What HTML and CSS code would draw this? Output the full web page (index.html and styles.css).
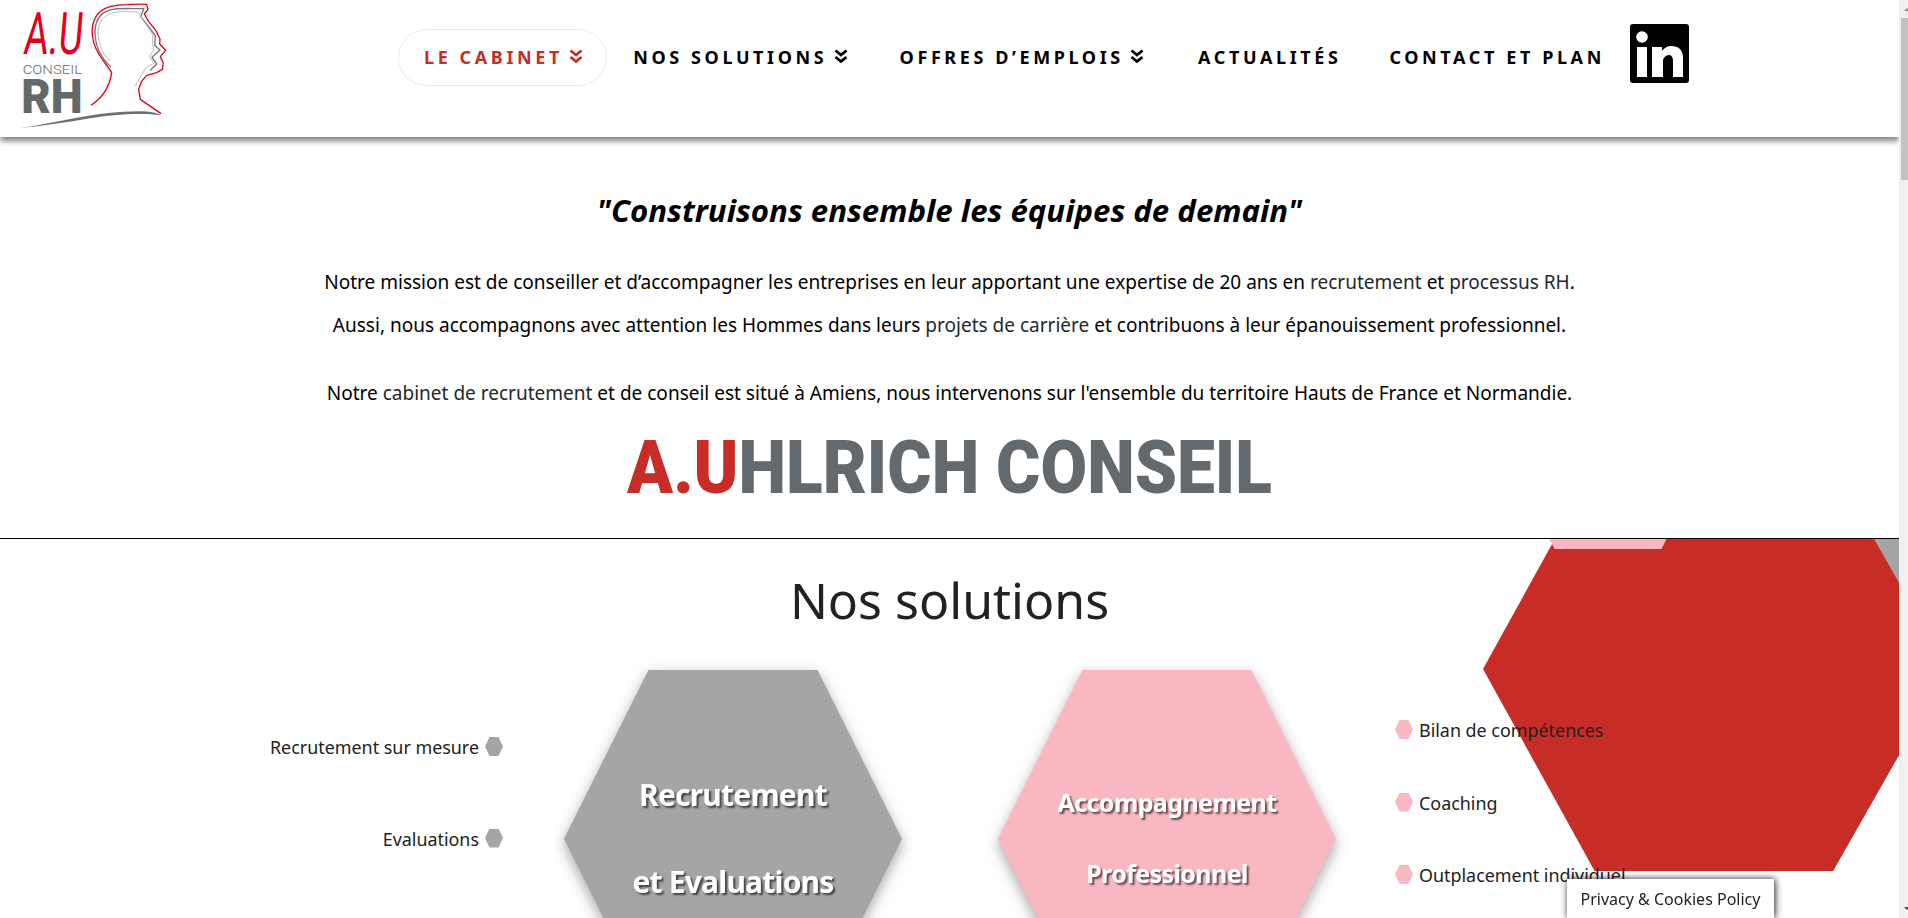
FILE: index.html
```html
<!DOCTYPE html>
<html lang="fr">
<head>
<meta charset="utf-8">
<title>A.U Conseil RH</title>
<link rel="stylesheet" href="styles.css">
</head>
<body>
<div class="page">
  <header class="site-header">
    <a class="logo" href="#">
      <svg viewBox="0 0 510 411" width="170" height="137">
        <text class="logo-au" x="74" y="163" textLength="176" lengthAdjust="spacingAndGlyphs">A.U</text>
        <text class="logo-conseil" x="68" y="222" textLength="178" lengthAdjust="spacingAndGlyphs">CONSEIL</text>
        <text class="logo-rh" x="64" y="340" textLength="184" lengthAdjust="spacingAndGlyphs">RH</text>
        <path class="head-red" d="M274 315C305 295 328 265 335 218C318 190 292 165 282 130C270 90 278 55 300 35C320 18 345 14 380 14C400 13 425 12 440 13L444 28L433 42L446 65L468 92L480 118L479 132L497 151L481 170L490 190L487 208L470 218L440 226L424 245L416 268L421 298L482 340"/>
        <path class="head-dark" d="M332 200C300 170 285 135 285 95C286 55 305 32 345 27C375 24 405 27 432 25L422 50L448 82L466 108L464 136L480 150L456 172L470 192L452 210"/>
        <path class="head-mid" d="M330 182C305 160 295 130 294 98C294 65 312 42 350 36C375 33 395 36 415 36L430 62L458 104L458 134L462 150L448 170L462 190L440 200L405 258"/>
        <path class="swoosh" d="M60 384C170 368 270 340 370 335C420 332 465 332 483 346C430 338 340 342 270 355C200 367 130 378 60 384Z"/>
      </svg>
    </a>
    <nav class="main-nav">
      <a class="nav-item active" href="#">LE CABINET <svg class="chev" viewBox="0 0 14 15"><path d="M1.5 1.5l5.5 4.5 5.5-4.5M1.5 8l5.5 4.5 5.5-4.5"/></svg></a>
      <a class="nav-item" href="#">NOS SOLUTIONS <svg class="chev" viewBox="0 0 14 15"><path d="M1.5 1.5l5.5 4.5 5.5-4.5M1.5 8l5.5 4.5 5.5-4.5"/></svg></a>
      <a class="nav-item wide" href="#">OFFRES D’EMPLOIS <svg class="chev" viewBox="0 0 14 15"><path d="M1.5 1.5l5.5 4.5 5.5-4.5M1.5 8l5.5 4.5 5.5-4.5"/></svg></a>
      <a class="nav-item plain" href="#">ACTUALITÉS</a>
      <a class="nav-item plain" href="#">CONTACT ET PLAN</a>
      <a class="linkedin" href="#" aria-label="LinkedIn">
        <svg viewBox="0 0 59 59" width="59" height="59">
          <rect width="59" height="59" rx="3"/>
          <circle cx="12" cy="13" r="5.8" fill="#fff"/>
          <rect x="7" y="23" width="10" height="30" fill="#fff"/>
          <path fill="#fff" d="M22 23h10v4c2-3 5-5 9-5 8 0 12 4 12 12v19H43V37c0-3-1-6-4-6s-6 3-6 6v16H22z"/>
        </svg>
      </a>
    </nav>
  </header>

  <section class="intro">
    <h2 class="slogan">"Construisons ensemble les équipes de demain"</h2>
    <p>Notre mission est de conseiller et d’accompagner les entreprises en leur apportant une expertise de 20 ans en <a href="#">recrutement</a> et <a href="#">processus RH</a>.</p>
    <p>Aussi, nous accompagnons avec attention les Hommes dans leurs <a href="#">projets de carrière</a> et contribuons à leur épanouissement professionnel.</p>
    <p class="gap-top">Notre <a href="#">cabinet de recrutement</a> et de conseil est situé à Amiens, nous intervenons sur l'ensemble du territoire Hauts de France et Normandie.</p>
    <h1 class="brand"><span class="brand-red">A.U</span>HLRICH CONSEIL</h1>
  </section>

  <section class="solutions">
    <div class="deco deco-gray"></div>
    <div class="deco deco-pink"></div>
    <div class="deco-red"></div>
    <h2 class="solutions-title">Nos solutions</h2>
    <div class="solutions-row">
      <ul class="side-list left">
        <li>Recrutement sur mesure<span class="bullet gray"></span></li>
        <li>Evaluations<span class="bullet gray"></span></li>
      </ul>
      <div class="hex-wrap">
        <div class="hex hex-gray"><p>Recrutement</p><p>et Evaluations</p></div>
      </div>
      <div class="hex-wrap second">
        <div class="hex hex-pink"><p>Accompagnement</p><p>Professionnel</p></div>
      </div>
      <ul class="side-list right">
        <li><span class="bullet pink"></span>Bilan de compétences</li>
        <li><span class="bullet pink"></span>Coaching</li>
        <li><span class="bullet pink"></span>Outplacement individuel</li>
      </ul>
    </div>
  </section>
</div>
<div class="privacy">Privacy &amp; Cookies Policy</div>
<div class="scrollbar"><div class="scroll-up"></div><div class="scroll-thumb"></div><div class="scroll-down"></div></div>
</body>
</html>
```
FILE: styles.css
```css
* { box-sizing: border-box; }
html, body { margin: 0; height: 100%; overflow: hidden; background: #fff; }
body { font-family: "Noto Sans", "Open Sans", sans-serif; color: #000; }
a { color: inherit; text-decoration: none; }
.page { width: 1899px; height: 918px; overflow: hidden; }

.site-header { height: 137px; display: flex; align-items: flex-start; background: #fff; box-shadow: 0 4px 6px rgba(0,0,0,.5); position: relative; z-index: 2; }
.logo { display: block; width: 170px; height: 137px; flex: none; }
.logo svg { display: block; }
.logo-au { font: 400 176px "Roboto", sans-serif; fill: #e2001a; transform-box: fill-box; transform-origin: center; transform: skewX(-5deg); }
.logo-conseil { font: 300 38px "Roboto", sans-serif; fill: #63686b; }
.logo-rh { font: 900 145px "Roboto", sans-serif; fill: #63686b; }
.head-red, .head-dark, .head-mid { fill: none; stroke-linejoin: round; stroke-linecap: round; }
.head-red { stroke: #e2001a; stroke-width: 4; }
.head-dark { stroke: #777; stroke-width: 4; }
.head-mid { stroke: #bbb; stroke-width: 3; }
.swoosh { fill: #6b6f72; }

.main-nav { display: flex; align-items: flex-start; margin-left: 228px; padding-top: 29px; }
.nav-item { display: flex; align-items: center; height: 57px; padding: 0 25px 2px; border: 1px solid transparent; border-radius: 29px; font-size: 18px; font-weight: 700; letter-spacing: 3.6px; white-space: pre; }
.nav-item.wide { padding-right: 27px; }
.nav-item.plain { padding-right: 21px; }
.nav-item.active { color: #c82c27; border-color: #ebebeb; padding-right: 23px; }
.chev { width: 14px; height: 15px; margin-left: -2px; fill: none; stroke: currentColor; stroke-width: 2.8; }
.linkedin { display: block; margin: -5px 0 0 3px; }
.linkedin svg { display: block; }

.intro { height: 402px; padding-top: 54px; text-align: center; border-bottom: 1px solid #000; }
.slogan { margin: 0 0 32px; font-size: 31.2px; line-height: 38px; font-weight: 700; font-style: italic; }
.intro p { margin: 0; font-size: 19.03px; line-height: 43px; }
.intro p a { color: #23282d; }
.intro p.gap-top { margin-top: 25px; }
.brand { display: block; margin: 8px 0 0; font-family: "Roboto", sans-serif; font-size: 74px; line-height: 90px; font-weight: 900; color: #63696c; white-space: nowrap; transform: scaleX(.914); }
.brand-red { color: #c82c27; }

.solutions { position: relative; height: 379px; overflow: hidden; }
.deco { position: absolute; clip-path: polygon(25% 0, 75% 0, 100% 50%, 75% 100%, 25% 100%, 0 50%); }
.deco-red { position: absolute; left: 1483px; top: -72px; width: 465px; height: 404px; background: #c82c27; clip-path: polygon(24% 0, 75.3% 0, 100% 50%, 75.3% 100%, 24% 100%, 0 50%); }
.deco-pink { left: 1501px; top: -204px; width: 214px; height: 214px; background: #f9b8c1; z-index: 1; }
.deco-gray { left: 1860px; top: -160px; width: 200px; height: 380px; background: #a5a5a5; }
.solutions-title { position: relative; margin: 0; padding-top: 25px; text-align: center; font-size: 50px; line-height: 72px; font-weight: 400; color: #222; }
.solutions-row { position: relative; z-index: 2; display: flex; align-items: flex-start; margin-top: 34px; }
.side-list { list-style: none; margin: 0; padding: 0; font-size: 17.9px; color: #222; }
.side-list.left { width: 503px; text-align: right; padding-top: 67px; }
.side-list.left li { height: 91.5px; line-height: 20px; display: flex; justify-content: flex-end; align-items: flex-start; }
.side-list.right { padding-top: 50px; margin-left: 59px; }
.side-list.right li { height: 72.5px; line-height: 20px; display: flex; align-items: flex-start; }
.bullet { display: block; flex: none; width: 18px; height: 19px; clip-path: polygon(25% 0, 75% 0, 100% 50%, 75% 100%, 25% 100%, 0 50%); }
.bullet.gray { background: #a5a5a5; margin-left: 6px; }
.bullet.pink { background: #f9b8c1; margin-right: 6px; }

.hex-wrap { width: 338px; height: 338px; margin-left: 61px; filter: drop-shadow(0 5px 7px rgba(0,0,0,.35)); flex: none; }
.hex-wrap.second { margin-left: 96px; }
.hex { width: 338px; height: 338px; clip-path: polygon(25% 0, 75% 0, 100% 50%, 75% 100%, 25% 100%, 0 50%); display: flex; flex-direction: column; align-items: center; color: #fff; font-weight: 700; text-shadow: 2px 2px 2px rgba(0,0,0,.6); }
.hex p { margin: 0; }
.hex-gray { background: #a5a5a5; font-size: 30px; letter-spacing: -.8px; line-height: 87px; padding-top: 81px; }
.hex-pink { background: #f9b8c1; font-size: 25px; letter-spacing: -.6px; line-height: 71px; padding-top: 97px; }

.privacy { position: fixed; left: 1567px; top: 879px; width: 207px; height: 39px; padding-top: 8px; text-align: center; background: #fff; font-size: 16px; line-height: 24px; color: #222; box-shadow: 1px 0 7px rgba(0,0,0,.9); z-index: 5; }

.scrollbar { position: fixed; left: 1899px; top: 0; width: 9px; height: 918px; background: #f0f0f0; z-index: 6; }
.scroll-thumb { position: absolute; left: 2px; top: 18px; width: 7px; height: 162px; background: #c1c1c1; }
.scroll-up, .scroll-down { position: absolute; left: 5px; width: 0; height: 0; border-left: 3px solid transparent; border-right: 3px solid transparent; }
.scroll-up { top: 8px; border-bottom: 3px solid #8a8a8a; }
.scroll-down { bottom: 8px; border-top: 3px solid #505050; }
```
